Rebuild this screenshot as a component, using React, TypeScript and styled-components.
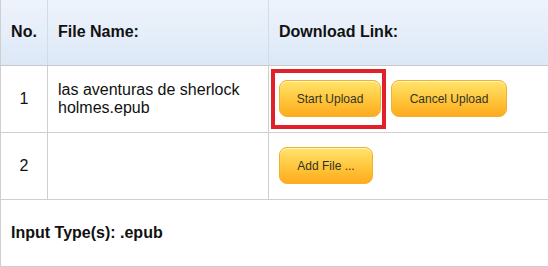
import React from 'react';
import styled, { createGlobalStyle } from 'styled-components';

const GlobalStyle = createGlobalStyle`
  html, body {
    margin: 0;
    padding: 0;
    background: #ffffff;
  }
  body {
    font-family: "Liberation Sans", Arial, sans-serif;
    color: #111;
  }
`;

const UploadTable = styled.table`
  width: 100%;
  border-collapse: collapse;
  table-layout: fixed;
  font-size: 16px;
`;

const HeadCell = styled.th<{ $align?: 'left' | 'center'; $width?: number }>`
  height: 65px;
  padding: 0 10px;
  box-sizing: border-box;
  width: ${({ $width }) => ($width ? `${$width}px` : 'auto')};
  text-align: ${({ $align }) => $align ?? 'left'};
  font-weight: bold;
  color: #111;
  background: linear-gradient(to bottom, #eef3fb 0%, #dce8f7 100%);
  border-left: 1px solid #d3dbe6;
  border-bottom: 1px solid #c8c8c8;
  &:first-child {
    border-left: 1px solid #cfcfcf;
  }
`;

const Cell = styled.td<{ $align?: 'left' | 'center' }>`
  height: 67px;
  padding: 0 10px;
  box-sizing: border-box;
  text-align: ${({ $align }) => $align ?? 'left'};
  vertical-align: middle;
  border-left: 1px solid #cfcfcf;
  border-bottom: 1px solid #cfcfcf;
  line-height: 18px;
`;

const FooterCell = styled(Cell)`
  font-weight: bold;
`;

const ButtonRow = styled.div`
  display: flex;
  align-items: center;
  gap: 10px;
`;

const Highlight = styled.span`
  position: relative;
  display: inline-flex;
  &::after {
    content: '';
    position: absolute;
    left: -8px;
    right: -5px;
    top: -11px;
    bottom: -12px;
    border: 4px solid #e2202a;
    pointer-events: none;
  }
`;

const GoldButton = styled.button<{ $width: number }>`
  width: ${({ $width }) => $width}px;
  height: 37px;
  padding: 0;
  box-sizing: border-box;
  border: 1px solid #f2b12c;
  border-radius: 8px;
  background: linear-gradient(to bottom, #ffe46c 0%, #ffc53b 55%, #ffab1e 100%);
  box-shadow: inset 0 1px 0 rgba(255, 255, 230, 0.7);
  font-family: "Liberation Sans", Arial, sans-serif;
  font-size: 12px;
  color: #333322;
  cursor: pointer;
`;

export default function App() {
  return (
    <>
      <GlobalStyle />
      <UploadTable>
        <thead>
          <tr>
            <HeadCell $align="center" $width={47}>No.</HeadCell>
            <HeadCell $width={221}>File Name:</HeadCell>
            <HeadCell>Download Link:</HeadCell>
          </tr>
        </thead>
        <tbody>
          <tr>
            <Cell $align="center">1</Cell>
            <Cell>las aventuras de sherlock holmes.epub</Cell>
            <Cell>
              <ButtonRow>
                <Highlight>
                  <GoldButton $width={102}>Start Upload</GoldButton>
                </Highlight>
                <GoldButton $width={116}>Cancel Upload</GoldButton>
              </ButtonRow>
            </Cell>
          </tr>
          <tr>
            <Cell $align="center">2</Cell>
            <Cell />
            <Cell>
              <ButtonRow>
                <GoldButton $width={94}>Add File ...</GoldButton>
              </ButtonRow>
            </Cell>
          </tr>
          <tr>
            <FooterCell colSpan={3}>Input Type(s): .epub</FooterCell>
          </tr>
        </tbody>
      </UploadTable>
    </>
  );
}
